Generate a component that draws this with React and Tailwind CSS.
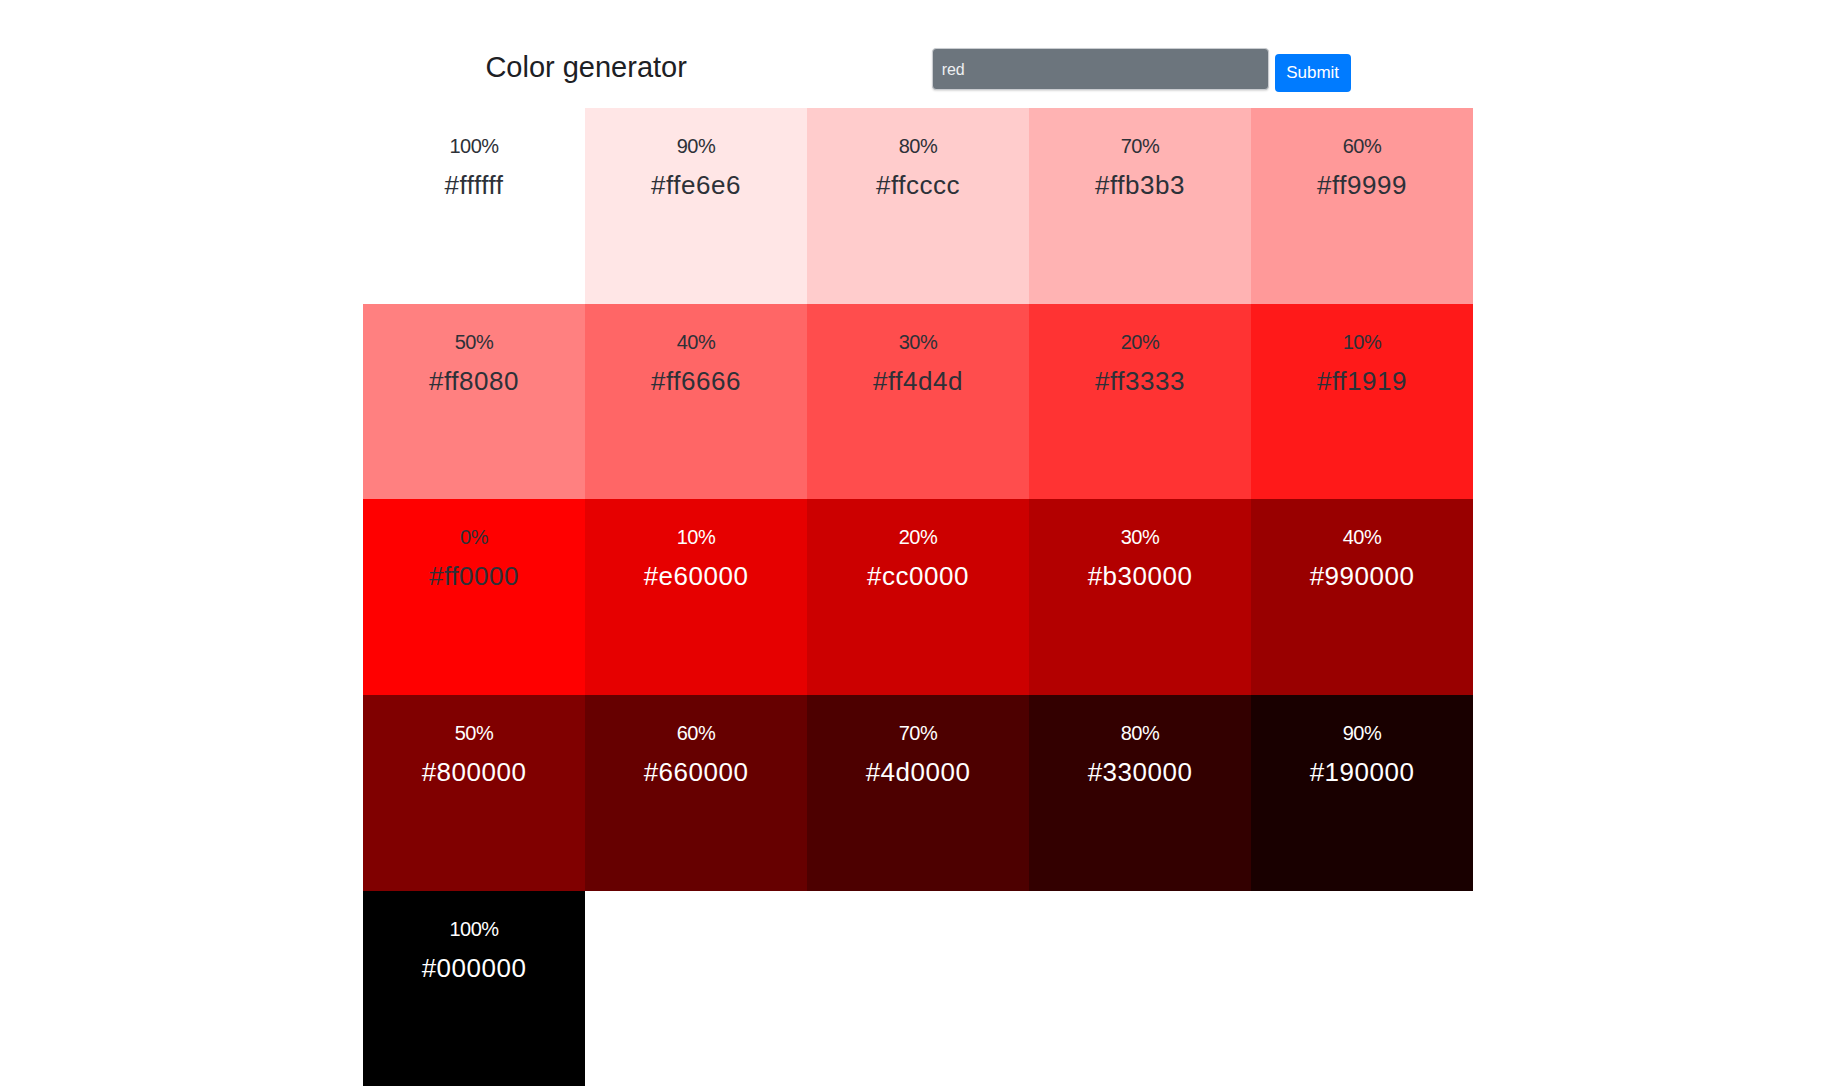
const colors = [
  ['100%', '#ffffff'], ['90%', '#ffe6e6'], ['80%', '#ffcccc'], ['70%', '#ffb3b3'], ['60%', '#ff9999'],
  ['50%', '#ff8080'], ['40%', '#ff6666'], ['30%', '#ff4d4d'], ['20%', '#ff3333'], ['10%', '#ff1919'],
  ['0%', '#ff0000'], ['10%', '#e60000'], ['20%', '#cc0000'], ['30%', '#b30000'], ['40%', '#990000'],
  ['50%', '#800000'], ['60%', '#660000'], ['70%', '#4d0000'], ['80%', '#330000'], ['90%', '#190000'],
  ['100%', '#000000'],
];

function Swatch({ weight, hex, index }) {
  const light = index > 10;
  return (
    <article
      className={`flex h-[18vh] flex-col items-center pt-[24px] ${light ? 'text-white' : 'text-[#2d3138]'}`}
      style={{ backgroundColor: hex }}
    >
      <p className="text-[20px] leading-[28px] tracking-[-0.5px]">{weight}</p>
      <p className="mt-[8px] text-[26px] leading-[34px] tracking-[0.5px]">{hex}</p>
    </article>
  );
}

export default function App() {
  return (
    <main className="mx-auto w-[1110px] font-['Liberation_Sans',sans-serif]">
      <header className="flex items-start justify-around pt-[48px] pb-[16px]">
        <h3 className="mt-[1px] text-[29px] leading-[36px] text-[#1d2024]">Color generator</h3>
        <form className="flex items-start gap-[6px]" onSubmit={(event) => event.preventDefault()}>
          <input
            defaultValue="red"
            className="h-[42px] w-[337px] rounded-[4px] border border-[#c9ccd0] bg-[#6c757d] px-[9px] pt-[2px] text-[16px] text-[#eef0f2] shadow-[0_1px_2px_rgba(0,0,0,0.15)] outline-none"
          />
          <button className="mt-[6px] h-[38px] w-[76px] rounded-[4px] bg-[#007bff] text-[17px] text-white">Submit</button>
        </form>
      </header>
      <section className="grid grid-cols-5">
        {colors.map(([weight, hex], index) => (
          <Swatch key={index} weight={weight} hex={hex} index={index} />
        ))}
      </section>
    </main>
  );
}
